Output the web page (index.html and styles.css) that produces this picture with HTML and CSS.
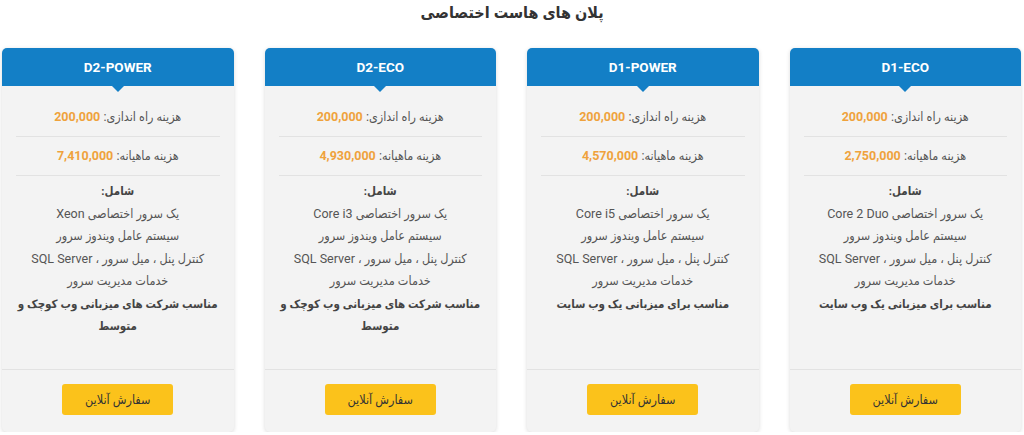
FILE: index.html
```html
<!DOCTYPE html>
<html lang="fa" dir="rtl">
<head>
  <meta charset="UTF-8">
  <title>پلان های هاست اختصاصی</title>
  <link rel="stylesheet" href="styles.css">
</head>
<body>
<h1 class="page-title">پلان های هاست اختصاصی</h1>
<div class="plans">
  <div class="plan">
    <div class="plan-head">D1-ECO</div>
    <div class="prices">
      <div class="price-row">هزینه راه اندازی: <span class="price">200,000</span></div>
      <div class="price-row">هزینه ماهیانه: <span class="price">2,750,000</span></div>
    </div>
    <div class="features">
      <div class="feat-title">شامل:</div>
      <div>یک سرور اختصاصی Core 2 Duo</div>
      <div>سیستم عامل ویندوز سرور</div>
      <div>کنترل پنل ، میل سرور ، SQL Server</div>
      <div>خدمات مدیریت سرور</div>
      <div class="feat-note">مناسب برای میزبانی یک وب سایت</div>
    </div>
    <div class="plan-foot"><a class="order-btn" href="#">سفارش آنلاین</a></div>
  </div>
  <div class="plan">
    <div class="plan-head">D1-POWER</div>
    <div class="prices">
      <div class="price-row">هزینه راه اندازی: <span class="price">200,000</span></div>
      <div class="price-row">هزینه ماهیانه: <span class="price">4,570,000</span></div>
    </div>
    <div class="features">
      <div class="feat-title">شامل:</div>
      <div>یک سرور اختصاصی Core i5</div>
      <div>سیستم عامل ویندوز سرور</div>
      <div>کنترل پنل ، میل سرور ، SQL Server</div>
      <div>خدمات مدیریت سرور</div>
      <div class="feat-note">مناسب برای میزبانی یک وب سایت</div>
    </div>
    <div class="plan-foot"><a class="order-btn" href="#">سفارش آنلاین</a></div>
  </div>
  <div class="plan">
    <div class="plan-head">D2-ECO</div>
    <div class="prices">
      <div class="price-row">هزینه راه اندازی: <span class="price">200,000</span></div>
      <div class="price-row">هزینه ماهیانه: <span class="price">4,930,000</span></div>
    </div>
    <div class="features">
      <div class="feat-title">شامل:</div>
      <div>یک سرور اختصاصی Core i3</div>
      <div>سیستم عامل ویندوز سرور</div>
      <div>کنترل پنل ، میل سرور ، SQL Server</div>
      <div>خدمات مدیریت سرور</div>
      <div class="feat-note">مناسب شرکت های میزبانی وب کوچک و متوسط</div>
    </div>
    <div class="plan-foot"><a class="order-btn" href="#">سفارش آنلاین</a></div>
  </div>
  <div class="plan">
    <div class="plan-head">D2-POWER</div>
    <div class="prices">
      <div class="price-row">هزینه راه اندازی: <span class="price">200,000</span></div>
      <div class="price-row">هزینه ماهیانه: <span class="price">7,410,000</span></div>
    </div>
    <div class="features">
      <div class="feat-title">شامل:</div>
      <div>یک سرور اختصاصی Xeon</div>
      <div>سیستم عامل ویندوز سرور</div>
      <div>کنترل پنل ، میل سرور ، SQL Server</div>
      <div>خدمات مدیریت سرور</div>
      <div class="feat-note">مناسب شرکت های میزبانی وب کوچک و متوسط</div>
    </div>
    <div class="plan-foot"><a class="order-btn" href="#">سفارش آنلاین</a></div>
  </div>
</div>
</body>
</html>
```

FILE: styles.css
```css
body {
  margin: 0;
  background: #fff;
  color: #555;
  font-family: Roboto, "DejaVu Sans Condensed", "DejaVu Sans", sans-serif;
  font-size: 12.5px;
}
.page-title {
  margin: 0;
  padding-top: 3px;
  height: 45px;
  text-align: center;
  font-size: 16px;
  font-weight: bold;
  line-height: 20px;
  color: #333;
}
.plans {
  display: grid;
  grid-template-columns: repeat(4, 1fr);
  gap: 31px;
  padding: 0 3px 0 2px;
}
.plan {
  display: flex;
  flex-direction: column;
  background: #f3f3f3;
  border-radius: 5px;
  box-shadow: 0 1px 4px rgba(0,0,0,0.15);
  text-align: center;
}
.plan-head {
  position: relative;
  height: 38px;
  line-height: 38px;
  background: #137fc6;
  color: #fff;
  font-size: 13.5px;
  font-weight: bold;
  border-radius: 5px 5px 0 0;
}
.plan-head::after {
  content: "";
  position: absolute;
  left: 50%;
  bottom: -6px;
  margin-left: -6px;
  border-left: 6px solid transparent;
  border-right: 6px solid transparent;
  border-top: 6px solid #137fc6;
}
.prices {
  padding: 12px 14px 0;
}
.price-row {
  padding: 9px 0;
  line-height: 20px;
  border-bottom: 1px solid #e2e2e2;
  color: #555;
}
.price {
  color: #efa23c;
  font-weight: bold;
  font-size: 12.5px;
}
.features {
  flex: 1;
  padding: 4px 10px 31px;
  line-height: 22.5px;
}
.feat-title,
.feat-note {
  font-weight: bold;
  font-size: 11.5px;
  color: #444;
}
.plan-foot {
  border-top: 1px solid #e2e2e2;
  padding: 14px 0 17px;
}
.order-btn {
  display: inline-block;
  width: 111px;
  height: 31px;
  line-height: 31px;
  background: #fbc21b;
  color: #333;
  border-radius: 3px;
  text-decoration: none;
  font-size: 12.5px;
}
```
